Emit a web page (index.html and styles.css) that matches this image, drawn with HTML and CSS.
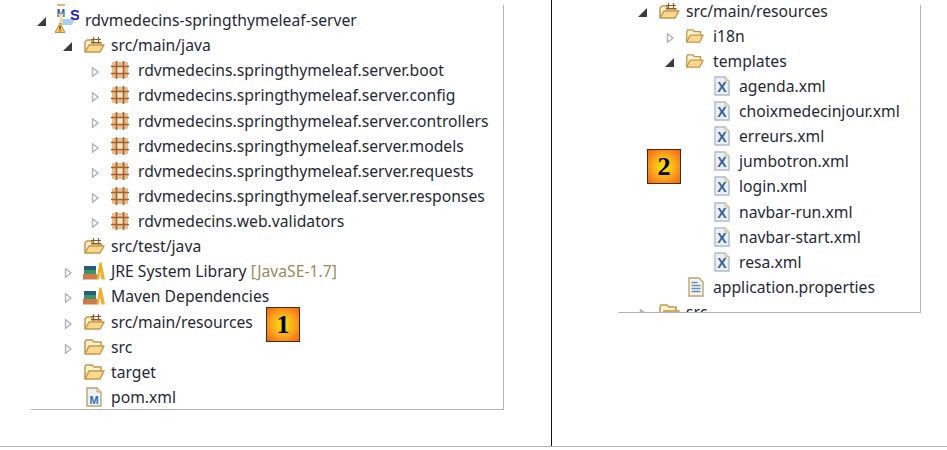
FILE: index.html
```html
<!DOCTYPE html>
<html lang="en">
<head>
    <meta charset="UTF-8">
    <title>Project tree</title>
    <link rel="stylesheet" href="styles.css">
</head>
<body>
<svg class="defs" width="0" height="0">
    <defs>
        <symbol id="open" viewBox="0 0 10 10"><path d="M9 0V9H0z" fill="#3c3c3c"/></symbol>
        <symbol id="closed" viewBox="0 0 10 10"><path d="M2.500 .7v8.600l5.500-4.300z" fill="#fff" stroke="#aeb3b8" stroke-width="1.400"/></symbol>
        <symbol id="folder" viewBox="0 0 22 18"><path d="M2 16V4l1-2h6l2 2h7v4" fill="#fdf2d2" stroke="#c8964a" stroke-width="1.500"/><path d="M2 16l4-8h15l-4 8z" fill="#fbd88e" stroke="#c8964a" stroke-width="1.500" stroke-linejoin="round"/></symbol>
        <symbol id="srcfolder" viewBox="0 0 22 18"><path d="M2 16V6l2-2h5v3h9v2" fill="#fdf2d2" stroke="#c8964a" stroke-width="1.500"/><path d="M2 16l4-7h15l-4 7z" fill="#fbd88e" stroke="#c8964a" stroke-width="1.500" stroke-linejoin="round"/><path d="M10.500 7.500V1M15.500 7.500V1M8 3.500h10M8 6.500h10" stroke="#8f5a2c" stroke-width="1.200" fill="none"/></symbol>
        <symbol id="pkg" viewBox="0 0 18 18"><rect x="1" y="1" width="16" height="16" rx="1" fill="#e8bd8c"/><rect x="6" y="6" width="6" height="6" fill="#fbe6c8"/><path d="M5.500 0v18M12.500 0v18M0 5.500h18M0 12.500h18" stroke="#a2622f" stroke-width="1.600"/></symbol>
        <symbol id="books" viewBox="0 0 22 18"><rect x="1" y="4" width="12" height="4" fill="#245f80"/><rect x="1" y="8" width="12" height="4" fill="#3f9560"/><rect x="0" y="12" width="14" height="5.500" fill="#cc7a4a"/><path d="M13.500 17.500l3-17h2l3.500 17h-3.500l-1.500-8-1 8z" fill="#f2ae28"/></symbol>
        <symbol id="xml" viewBox="0 0 16 20"><path d="M1 1h10l4 4v14H1z" fill="#e9f0f9" stroke="#aebccd" stroke-width="1.400"/><path d="M11 1v4h4" fill="#f3e0b0" stroke="#d8bc80"/><text x="8" y="16" class="xmark">X</text></symbol>
        <symbol id="pom" viewBox="0 0 16 20"><path d="M1 1h10l4 4v14H1z" fill="#eef2f8" stroke="#b8a470" stroke-width="1.400"/><path d="M11 1v4h4" fill="#f3e0b0" stroke="#b8a470"/><text x="8" y="16.500" class="pommark">M</text></symbol>
        <symbol id="props" viewBox="0 0 16 20"><path d="M1 1h10l4 4v14H1z" fill="#f6f4ea" stroke="#b8a470" stroke-width="1.400"/><path d="M3.500 5.500h6M3.500 8.500h9M3.500 11.500h9M3.500 14.500h9" stroke="#6a8cb8" stroke-width="1.700"/></symbol>
        <symbol id="project" viewBox="0 0 24 26"><path d="M5 12h15l-3 6H5z" fill="#a6d0ee"/><text x="6" y="10" class="mmark">M</text><text x="15" y="13" class="smark">S</text><path d="M3.500 7h5l-1.500 5 1 4H4l1-4z" fill="#f6dca0"/><path d="M0 25.500l5-9.500 5 9.500z" fill="#f4c564" stroke="#c08f3c"/><path d="M5 19v3.500M5 23.500v1" stroke="#5a3a10" stroke-width="1.300"/></symbol>
    </defs>
</svg>

<div class="page">
    <div class="col col-left">
        <div class="panel panel-left">
            <span class="clip-mark"></span>
            <ul class="tree">
                <li class="row lv0"><svg class="arrow"><use href="#open"/></svg><svg class="icon icon-project"><use href="#project"/></svg><span>rdvmedecins-springthymeleaf-server</span></li>
                <li class="row lv1"><svg class="arrow"><use href="#open"/></svg><svg class="icon"><use href="#srcfolder"/></svg><span>src/main/java</span></li>
                <li class="row lv2"><svg class="arrow"><use href="#closed"/></svg><svg class="icon icon-pkg"><use href="#pkg"/></svg><span>rdvmedecins.springthymeleaf.server.boot</span></li>
                <li class="row lv2"><svg class="arrow"><use href="#closed"/></svg><svg class="icon icon-pkg"><use href="#pkg"/></svg><span>rdvmedecins.springthymeleaf.server.config</span></li>
                <li class="row lv2"><svg class="arrow"><use href="#closed"/></svg><svg class="icon icon-pkg"><use href="#pkg"/></svg><span>rdvmedecins.springthymeleaf.server.controllers</span></li>
                <li class="row lv2"><svg class="arrow"><use href="#closed"/></svg><svg class="icon icon-pkg"><use href="#pkg"/></svg><span>rdvmedecins.springthymeleaf.server.models</span></li>
                <li class="row lv2"><svg class="arrow"><use href="#closed"/></svg><svg class="icon icon-pkg"><use href="#pkg"/></svg><span>rdvmedecins.springthymeleaf.server.requests</span></li>
                <li class="row lv2"><svg class="arrow"><use href="#closed"/></svg><svg class="icon icon-pkg"><use href="#pkg"/></svg><span>rdvmedecins.springthymeleaf.server.responses</span></li>
                <li class="row lv2"><svg class="arrow"><use href="#closed"/></svg><svg class="icon icon-pkg"><use href="#pkg"/></svg><span>rdvmedecins.web.validators</span></li>
                <li class="row lv1"><span class="arrow"></span><svg class="icon"><use href="#srcfolder"/></svg><span>src/test/java</span></li>
                <li class="row lv1"><svg class="arrow"><use href="#closed"/></svg><svg class="icon"><use href="#books"/></svg><span>JRE System Library <em>[JavaSE-1.7]</em></span></li>
                <li class="row lv1"><svg class="arrow"><use href="#closed"/></svg><svg class="icon"><use href="#books"/></svg><span>Maven Dependencies</span></li>
                <li class="row lv1"><svg class="arrow"><use href="#closed"/></svg><svg class="icon"><use href="#srcfolder"/></svg><span>src/main/resources</span></li>
                <li class="row lv1"><svg class="arrow"><use href="#closed"/></svg><svg class="icon"><use href="#folder"/></svg><span>src</span></li>
                <li class="row lv1"><span class="arrow"></span><svg class="icon"><use href="#folder"/></svg><span>target</span></li>
                <li class="row lv1"><span class="arrow"></span><svg class="icon icon-file"><use href="#pom"/></svg><span>pom.xml</span></li>
            </ul>
            <div class="badge badge-1">1</div>
        </div>
    </div>
    <div class="col col-right">
        <div class="panel panel-right">
            <ul class="tree">
                <li class="row lv1"><svg class="arrow"><use href="#open"/></svg><svg class="icon"><use href="#srcfolder"/></svg><span>src/main/resources</span></li>
                <li class="row lv2"><svg class="arrow"><use href="#closed"/></svg><svg class="icon icon-small"><use href="#folder"/></svg><span>i18n</span></li>
                <li class="row lv2"><svg class="arrow"><use href="#open"/></svg><svg class="icon icon-small"><use href="#folder"/></svg><span>templates</span></li>
                <li class="row lv3"><span class="arrow"></span><svg class="icon icon-file"><use href="#xml"/></svg><span>agenda.xml</span></li>
                <li class="row lv3"><span class="arrow"></span><svg class="icon icon-file"><use href="#xml"/></svg><span>choixmedecinjour.xml</span></li>
                <li class="row lv3"><span class="arrow"></span><svg class="icon icon-file"><use href="#xml"/></svg><span>erreurs.xml</span></li>
                <li class="row lv3"><span class="arrow"></span><svg class="icon icon-file"><use href="#xml"/></svg><span>jumbotron.xml</span></li>
                <li class="row lv3"><span class="arrow"></span><svg class="icon icon-file"><use href="#xml"/></svg><span>login.xml</span></li>
                <li class="row lv3"><span class="arrow"></span><svg class="icon icon-file"><use href="#xml"/></svg><span>navbar-run.xml</span></li>
                <li class="row lv3"><span class="arrow"></span><svg class="icon icon-file"><use href="#xml"/></svg><span>navbar-start.xml</span></li>
                <li class="row lv3"><span class="arrow"></span><svg class="icon icon-file"><use href="#xml"/></svg><span>resa.xml</span></li>
                <li class="row lv2"><span class="arrow"></span><svg class="icon icon-file"><use href="#props"/></svg><span>application.properties</span></li>
                <li class="row lv1"><svg class="arrow"><use href="#closed"/></svg><svg class="icon"><use href="#folder"/></svg><span>src</span></li>
            </ul>
            <div class="badge badge-2">2</div>
        </div>
    </div>
</div>
</body>
</html>
```

FILE: styles.css
```css
*{
    margin: 0;
    padding: 0;
    box-sizing: border-box;
}
body{
    background: #fff;
    font-family: "Noto Sans", "Open Sans", sans-serif;
    font-size: 15.700px;
    color: #1f2a36;
}
li{
    list-style: none;
}
.defs{
    position: absolute;
}
.page{
    display: flex;
    height: 447px;
    border-bottom: 1px solid #b4b4b4;
}
.col-left{
    width: 552px;
    padding-left: 31px;
    border-right: 1px solid #111;
}
.col-right{
    flex: 1;
    padding-left: 66px;
}
.panel{
    position: relative;
    overflow: hidden;
    border-bottom: 1px solid #b4b4b4;
}
/* the side rule starts a little below the top of the pane */
.panel::after{
    content: "";
    position: absolute;
    top: 5px;
    right: 0;
    bottom: 0;
    width: 1px;
    background: #b4b4b4;
}
.panel-left{
    width: 473px;
    height: 410px;
    padding-top: 7.500px;
}
.panel-right{
    width: 303px;
    height: 313px;
}
.clip-mark{
    position: absolute;
    left: 26px;
    top: 4px;
    width: 8px;
    height: 2px;
    background: #e8b47a;
}
.panel-right .tree{
    margin-top: -2px;
}
.row{
    display: flex;
    align-items: center;
    height: 25.130px;
    white-space: nowrap;
}
.row em{
    font-style: normal;
    color: #9a8a5c;
}
.arrow{
    width: 10px;
    height: 10px;
    flex: none;
    margin: 4px 10px 0 2px;
}
.icon{
    width: 22px;
    height: 18px;
    margin-right: 6px;
    flex: none;
}
.icon-small{
    width: 19px;
    margin-right: 9px;
}
.icon-file{
    width: 16px;
    height: 20px;
    margin-left: 3px;
    margin-right: 9px;
}
.icon-pkg{
    width: 18px;
    height: 18px;
    margin-left: 1px;
    margin-right: 9px;
}
.icon-project{
    width: 24px;
    height: 26px;
    margin-left: -2px;
    margin-right: 6px;
}
.panel-left .lv0{ padding-left: 4px; }
.panel-left .lv1{ padding-left: 30px; }
.panel-left .lv2{ padding-left: 57px; }
.panel-right .lv1{ padding-left: 18px; }
.panel-right .lv2{ padding-left: 45px; }
.panel-right .lv3{ padding-left: 71px; }
.xmark{
    font: bold 14px "Liberation Sans", sans-serif;
    fill: #3d5f8f;
    text-anchor: middle;
}
.mmark{
    font: bold 10px "Liberation Sans", sans-serif;
    fill: #2c5f9c;
    text-anchor: middle;
}
.pommark{
    font: bold 11px "Liberation Sans", sans-serif;
    fill: #2c6fb0;
    text-anchor: middle;
}
.smark{
    font: bold 15px "Liberation Sans", sans-serif;
    fill: #2222cc;
}
.badge{
    position: absolute;
    width: 34px;
    height: 35px;
    border: 1px solid #4a2a10;
    background: radial-gradient(circle, #f2e80a 0%, #fbb01a 45%, #f4601c 100%);
    font: bold 26px "Liberation Serif", serif;
    color: #000;
    text-align: center;
    line-height: 33px;
}
.badge-1{
    left: 235px;
    top: 307px;
}
.badge-2{
    left: 29px;
    top: 149px;
}
```
